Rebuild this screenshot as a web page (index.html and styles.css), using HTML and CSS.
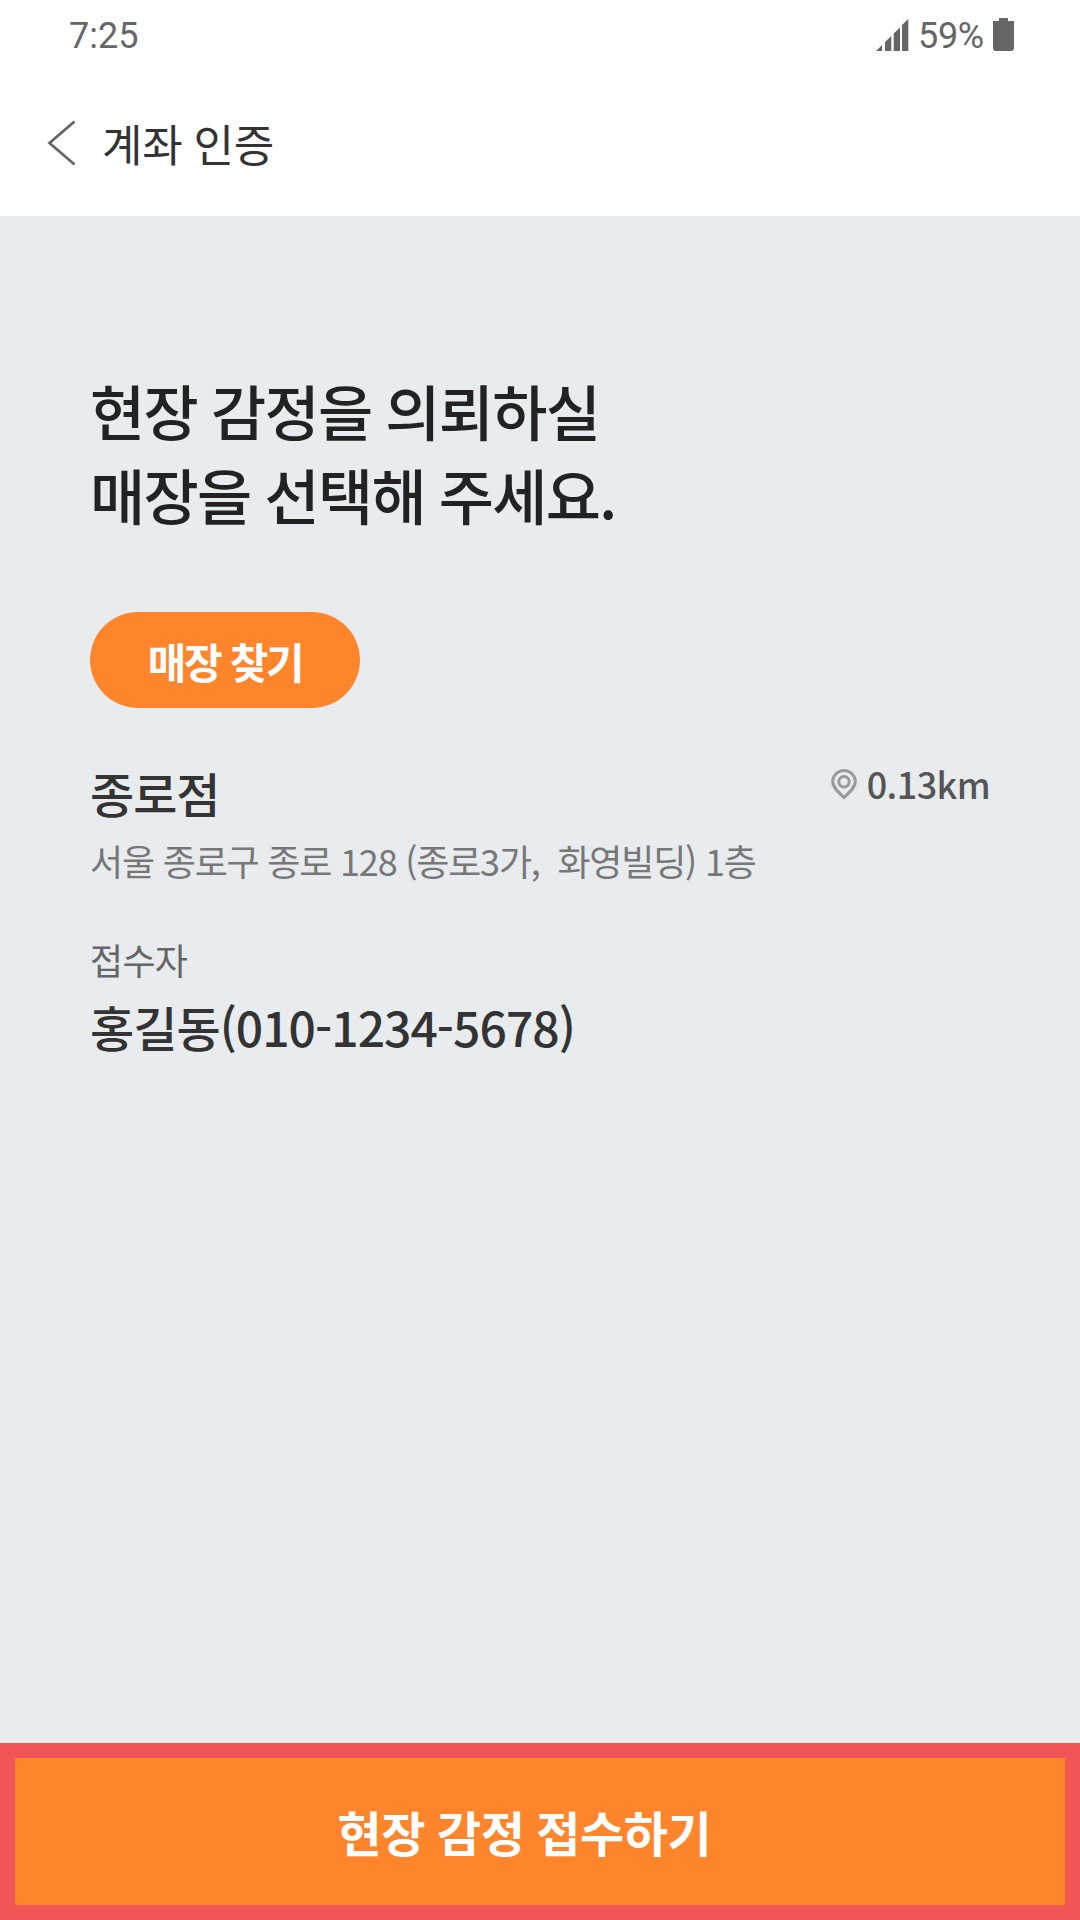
FILE: index.html
```html
<!DOCTYPE html>
<html lang="ko">
<head>
    <meta charset="UTF-8">
    <meta name="viewport" content="width=device-width, initial-scale=1.0">
    <title>계좌 인증</title>
    <link rel="stylesheet" href="styles.css">
</head>
<body>
    <div class="status-bar">
        <span class="time">7:25</span>
        <div class="status-icons">
            <svg class="signal" width="33" height="32" viewBox="0 0 33 32">
                <path d="M0 32L6 26V32Z M9 32V23L15.3 17V32Z M17.7 32V14.5L24 8.5V32Z M26 32V6L32.3 0V32Z" fill="#666"/>
            </svg>
            <span class="percent">59%</span>
            <svg class="battery" width="21" height="33" viewBox="0 0 21 33">
                <path d="M6 0H15V3H21V30Q21 33 18 33H3Q0 33 0 30V3H6Z" fill="#666"/>
            </svg>
        </div>
    </div>

    <header class="header">
        <svg class="back" width="30" height="46" viewBox="0 0 30 46">
            <path d="M27.5 1.5L2.5 23L27.5 44.5" fill="none" stroke="#666" stroke-width="2.8"/>
        </svg>
        <h1>계좌 인증</h1>
    </header>

    <main class="content">
        <h2>현장 감정을 의뢰하실<br>매장을 선택해 주세요.</h2>
        <button class="find-btn">매장 찾기</button>

        <div class="store">
            <h3>종로점</h3>
            <div class="distance">
                <svg width="26" height="31" viewBox="0 0 26 31">
                    <path d="M13 28.5C8 24 1.7 18.5 1.7 12.6a11.3 11.1 0 0 1 22.6 0C24.3 18.5 18 24 13 28.5Z" fill="none" stroke="#999" stroke-width="3"/>
                    <circle cx="13" cy="12.7" r="5.2" fill="none" stroke="#999" stroke-width="3"/>
                </svg>
                <span>0.13km</span>
            </div>
        </div>
        <p class="address">서울 종로구 종로 128 (종로3가,&nbsp; 화영빌딩) 1층</p>

        <p class="label">접수자</p>
        <p class="person">홍길동(010-1234-5678)</p>
    </main>

    <button class="submit-btn">현장 감정 접수하기</button>
</body>
</html>
```

FILE: styles.css
```css
* { margin: 0; padding: 0; box-sizing: border-box; }
body { width: 1080px; height: 1920px; display: flex; flex-direction: column; background: #fff; font-family: "Noto Sans CJK KR", "Noto Sans", sans-serif; color: #333; overflow: hidden; }
button { border: none; font-family: inherit; color: #fff; background: #ff852c; cursor: pointer; }

.status-bar { height: 72px; padding: 0 66px 0 69px; display: flex; justify-content: space-between; align-items: center; font-family: Roboto, sans-serif; font-size: 36px; color: #666; }
.status-icons { display: flex; align-items: center; }
.signal { margin: 0 9px 2px 0; }
.percent { width: 75px; letter-spacing: -0.3px; }
.battery { margin-bottom: 3px; }

.header { height: 144px; padding: 0 0 3px 47px; display: flex; align-items: center; }
.back { margin-right: 25px; }
h1 { font-size: 44px; font-weight: 400; line-height: 60px; letter-spacing: -0.2px; word-spacing: -1.2px; }

.content { flex: 1; padding: 152px 90px 0; background: #e8ecef; }
h2 { font-size: 60px; font-weight: 500; line-height: 84px; letter-spacing: -1.7px; word-spacing: -1.2px; color: #222; }
.find-btn { display: block; width: 270px; height: 96px; margin-top: 76px; border-radius: 48px; font-size: 42px; font-weight: 700; letter-spacing: -2.4px; }

.store { display: flex; justify-content: space-between; align-items: flex-start; margin-top: 54px; }
h3 { font-size: 48px; font-weight: 500; line-height: 60px; letter-spacing: -1px; }
.distance { display: flex; align-items: center; gap: 10px; font-size: 36px; font-weight: 500; line-height: 42px; letter-spacing: -0.6px; color: #555; }
.distance svg { margin-top: 2px; }
.address { margin-top: 12px; font-size: 36px; line-height: 52px; letter-spacing: -1.2px; color: #777; white-space: nowrap; }
.label { margin-top: 47px; font-size: 36px; line-height: 52px; letter-spacing: -0.7px; color: #666; }
.person { margin-top: 11px; font-size: 48px; font-weight: 500; line-height: 60px; letter-spacing: -0.95px; }

.submit-btn { height: 177px; padding: 0 31px 2px 0; border: 15px solid #f25555; font-size: 48px; font-weight: 700; letter-spacing: -0.4px; word-spacing: -1.2px; }
```
